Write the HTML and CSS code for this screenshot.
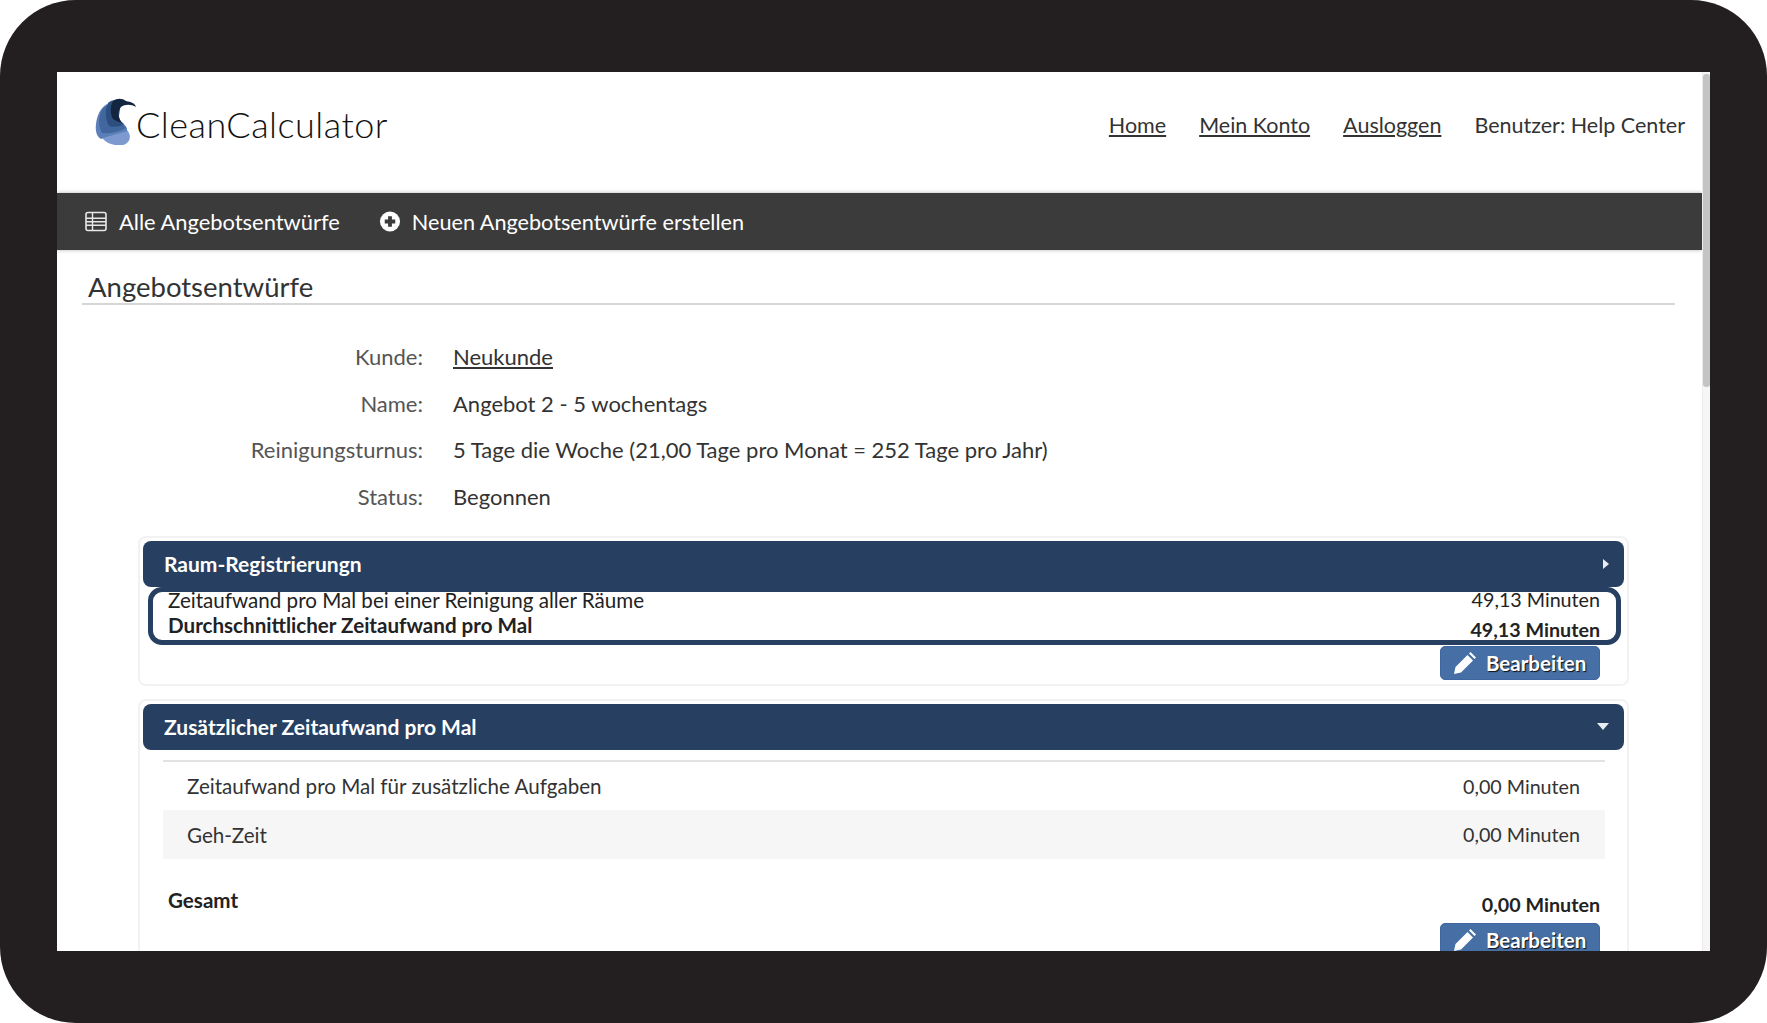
FILE: index.html
```html
<!DOCTYPE html>
<html lang="de">
<head>
<meta charset="utf-8">
<title>CleanCalculator</title>
<link rel="stylesheet" href="styles.css">
</head>
<body>
<div class="frame">
  <div class="screen">
    <div class="page">
      <header class="top">
        <div class="brand">
          <svg class="logo" viewBox="0 0 42 47" aria-hidden="true">
            <path fill="#7c9acf" d="M5 33C10 29 25 29 31 31C37 36 36 45 28 47C20 48 13 46 9 42C7 40 5 36 5 33Z"/>
            <path fill="#5b80b9" d="M1 26C0 33 2 39 6 41C12 38 24 36 32 33C33 29 29 26 26 24L12 6C5 10 2 18 1 26Z"/>
            <path fill="#42669e" d="M7 12C3 19 3 28 7 35C14 36 24 34 31 30C29 27 26 25 24 22L20 5C15 5 10 8 7 12Z"/>
            <path fill="#2d4f80" d="M13 5C10 11 10 21 14 28C20 30 26 28 29 26C26 24 24 21 24 18L26 3C21 1 16 2 13 5Z"/>
            <path fill="#14263f" d="M18 3C15 8 15 16 18 21C21 23 24 24 27 25C23 20 22 14 26 9C30 6 36 6 41 9C40 5 36 4 31 3C27 0 22 0 18 3Z"/>
          </svg>
          <span class="brand-name">CleanCalculator</span>
        </div>
        <nav class="user-nav">
          <a href="#">Home</a>
          <a href="#">Mein Konto</a>
          <a href="#">Ausloggen</a>
          <span>Benutzer: Help Center</span>
        </nav>
      </header>
      <nav class="toolbar">
        <a class="tool" href="#">
          <svg class="tool-icon" viewBox="0 0 22 20" aria-hidden="true">
            <rect x="1" y="1" width="20" height="18" rx="2" fill="none" stroke="#e8e8e8" stroke-width="1.6"/>
            <path d="M1 6.7H21M1 10.2H21M1 13.7H21M7.5 1V19" stroke="#e8e8e8" stroke-width="1.4" fill="none"/>
          </svg>
          Alle Angebotsentwürfe
        </a>
        <a class="tool tool-new" href="#">
          <svg class="tool-icon" viewBox="0 0 22 22" aria-hidden="true">
            <circle cx="11" cy="11" r="10.5" fill="#fff"/>
            <path d="M11 5.5V16.500M5.500 11H16.500" stroke="#3b3b3b" stroke-width="4"/>
          </svg>
          Neuen Angebotsentwürfe erstellen
        </a>
      </nav>
      <main class="content">
        <h1 class="title">Angebotsentwürfe</h1>
        <dl class="facts">
          <dt>Kunde:</dt><dd><a href="#">Neukunde</a></dd>
          <dt>Name:</dt><dd>Angebot 2 - 5 wochentags</dd>
          <dt>Reinigungsturnus:</dt><dd>5 Tage die Woche (21,00 Tage pro Monat = 252 Tage pro Jahr)</dd>
          <dt>Status:</dt><dd>Begonnen</dd>
        </dl>

        <section class="card card-first">
          <div class="card-head">
            <span>Raum-Registrierungn</span>
            <svg class="caret-right" viewBox="0 0 6 10" aria-hidden="true"><path d="M0 0L6 5L0 10Z" fill="#e8edf3"/></svg>
          </div>
          <div class="ring">
            <div class="ring-inner">
              <div class="ring-row"><span class="label">Zeitaufwand pro Mal bei einer Reinigung aller Räume</span><span>49,13 Minuten</span></div>
              <div class="ring-row ring-total"><b class="label">Durchschnittlicher Zeitaufwand pro Mal</b><b class="total-val">49,13 Minuten</b></div>
            </div>
          </div>
          <div class="actions">
            <a class="btn" href="#">
              <svg class="pencil" viewBox="0 0 22 22" aria-hidden="true"><path fill="#fff" d="M0 22L1.500 15L13.500 3L19 8.500L7 20.500ZM15 1.500L16.500 0L22 5.500L20.500 7Z"/></svg>
              Bearbeiten
            </a>
          </div>
        </section>

        <section class="card">
          <div class="card-head">
            <span>Zusätzlicher Zeitaufwand pro Mal</span>
            <svg class="caret-down" viewBox="0 0 12 7" aria-hidden="true"><path d="M0 0H12L6 7Z" fill="#e8edf3"/></svg>
          </div>
          <div class="table">
            <div class="table-row"><span class="label">Zeitaufwand pro Mal für zusätzliche Aufgaben</span><span>0,00 Minuten</span></div>
            <div class="table-row alt"><span class="label">Geh-Zeit</span><span>0,00 Minuten</span></div>
          </div>
          <div class="sum"><b class="label">Gesamt</b><b class="sum-val">0,00 Minuten</b></div>
          <div class="actions">
            <a class="btn" href="#">
              <svg class="pencil" viewBox="0 0 22 22" aria-hidden="true"><path fill="#fff" d="M0 22L1.500 15L13.500 3L19 8.500L7 20.500ZM15 1.500L16.500 0L22 5.500L20.500 7Z"/></svg>
              Bearbeiten
            </a>
          </div>
        </section>
      </main>
    </div>
    <div class="scrollbar"><div class="thumb"></div></div>
  </div>
</div>
</body>
</html>
```
FILE: styles.css
```css
* { box-sizing: border-box; }
html, body { margin: 0; padding: 0; height: 100%; background: #fff; }
body { font-family: "Lato", "Noto Sans", sans-serif; color: #222; font-size: 19.700px; overflow: hidden; }
a { color: inherit; }

.frame {
  width: 1767px;
  height: 1023px;
  background: #231f20;
  border-radius: 76px;
  padding: 72px 57px;
}
.screen {
  height: 879px;
  width: 1653px;
  background: #fff;
  display: flex;
  overflow: hidden;
}
.page { flex: 1; min-width: 0; overflow: hidden; }

.scrollbar { width: 8px; background: #f6f6f6; border-left: 1px solid #ececec; padding: 2px 0 0 0; }
.thumb { width: 7px; height: 313px; background: #c4c4c4; border-radius: 3px; }

.top {
  height: 121px;
  display: flex;
  justify-content: space-between;
  padding: 25px 17px 0 38px;
  background: #fff;
}
.brand { display: flex; align-items: flex-start; gap: 0; }
.logo { width: 42px; height: 47px; margin-top: 1px; flex: none; }
.brand-name { font-size: 36px; font-weight: 300; color: #111; line-height: 40px; margin-top: 7px; margin-left: -1px; letter-spacing: 0.5px; }
.user-nav { display: flex; gap: 33px; line-height: 26px; padding-top: 15px; color: #333; font-size: 21.500px; }

.toolbar {
  height: 57px;
  background: #3b3b3b;
  display: flex;
  align-items: center;
  gap: 39px;
  padding: 0 0 0 28px;
  box-shadow: 0 0 4px rgba(0,0,0,.3);
  position: relative;
}
.tool { display: flex; align-items: center; color: #fff; text-decoration: none; font-size: 21.900px; gap: 12px; }
.tool-new { font-size: 21.650px; gap: 11px; }
.tool-icon { width: 22px; height: 21px; flex: none; }

.content { padding: 0 0 0 25px; }
.title {
  margin: 0;
  width: 1593px;
  height: 55px;
  padding: 21px 0 0 6px;
  font-size: 27.500px;
  line-height: 32px;
  font-weight: 400;
  color: #333;
  border-bottom: 2px solid #d6d6d6;
}

.facts {
  display: grid;
  grid-template-columns: 341px 1fr;
  column-gap: 30px;
  row-gap: 0;
  margin: 28px 0 0 0;
  grid-auto-rows: 46.700px;
  align-items: center;
  font-size: 22px;
}
.facts dt { text-align: right; color: #555; }
.facts dd { margin: 0; color: #333; }

.card {
  width: 1491px;
  margin: 0 0 0 56px;
  border: 2px solid #f2f2f2;
  border-radius: 8px;
  padding: 3px;
}
.card-first { margin-top: 16px; height: 150px; margin-bottom: 13px; }
.card-head {
  height: 46px;
  background: #273f60;
  border-radius: 8px;
  color: #fff;
  font-weight: 700;
  font-size: 21px;
  display: flex;
  align-items: center;
  justify-content: space-between;
  padding: 0 15px 0 21px;
}
.caret-right { width: 6px; height: 10px; }
.caret-down { width: 12px; height: 7px; }

.label { font-size: 20.600px; }

.ring {
  height: 58px;
  margin: 0 3px 0 5px;
  border: 5px solid #273f60;
  border-radius: 14px;
  overflow: hidden;
  background: #fff;
}
.ring-inner { margin-top: -5px; padding: 0 16px 0 15px; }
.ring-row { display: flex; justify-content: space-between; line-height: 26px; }
.ring-total { line-height: 24px; }
.total-val { position: relative; top: 5px; }

.actions { display: flex; justify-content: flex-end; padding-right: 24px; }
.btn {
  width: 160px;
  height: 34px;
  margin-top: 1px;
  display: flex;
  align-items: center;
  gap: 10px;
  padding-left: 13px;
  background: #466fa6;
  border: 1px solid #3f66a0;
  border-radius: 5px;
  color: #fff;
  font-weight: 700;
  font-size: 20.500px;
  text-decoration: none;
  text-shadow: 1px 1px 1px #111;
}
.pencil { width: 22px; height: 22px; flex: none; }

.table { margin: 10px 19px 0 20px; border-top: 2px solid #e2e2e2; }
.table-row { height: 48.500px; display: flex; align-items: center; justify-content: space-between; padding: 0 25px 0 24px; color: #333; }
.table-row.alt { background: #f6f6f6; }
.sum { display: flex; justify-content: space-between; padding: 28px 24px 0 25px; line-height: 26px; }
.sum-val { position: relative; top: 5px; }
.sum + .actions .btn { margin-top: 10px; }
```
